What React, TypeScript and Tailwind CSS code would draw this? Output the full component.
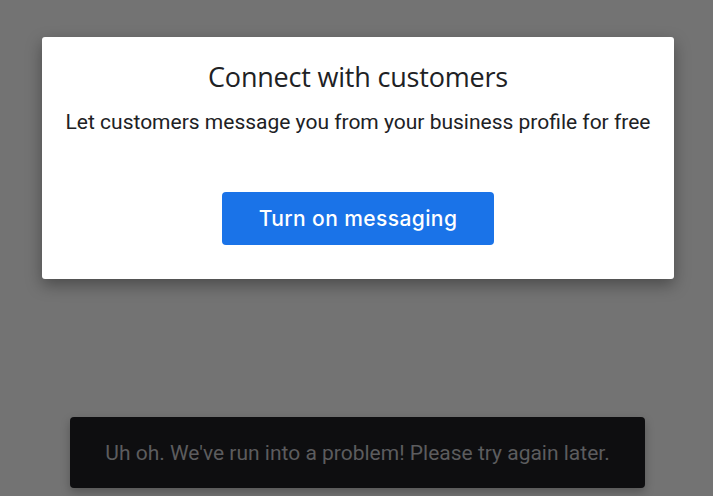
const App = () => {
  return (
    <div className="w-full h-[496px] bg-[#737373] flex flex-col overflow-hidden" style={{ fontFamily: "Roboto, sans-serif" }}>
      <div className="mt-[37px] ml-[42px] w-[632px] h-[242px] bg-white rounded-[3px] shadow-[0_6px_16px_rgba(0,0,0,0.35)] flex flex-col items-center pt-[23px]">
        <h1 className="text-[27px] leading-[33px] text-[#202124] font-['Open_Sans',sans-serif] tracking-[-0.2px]">
          Connect with customers
        </h1>
        <p className="mt-[15px] text-[21px] leading-[28px] text-[#202124]">
          Let customers message you from your business profile for free
        </p>
        <button className="mt-[56px] w-[272px] h-[53px] bg-[#1a73e8] rounded-[4px] text-white text-[21px] font-medium tracking-[0.4px] font-['Inter',sans-serif]">
          Turn on messaging
        </button>
      </div>
      <div className="mt-[138px] ml-[70px] w-[575px] h-[71px] bg-[#0e0e10] rounded-[4px] flex items-center justify-center pt-[3px] shadow-[0_4px_10px_rgba(0,0,0,0.25)]">
        <p className="text-[21px] text-[#5c5c5e]">
          Uh oh. We've run into a problem! Please try again later.
        </p>
      </div>
    </div>
  );
};

export default App;
